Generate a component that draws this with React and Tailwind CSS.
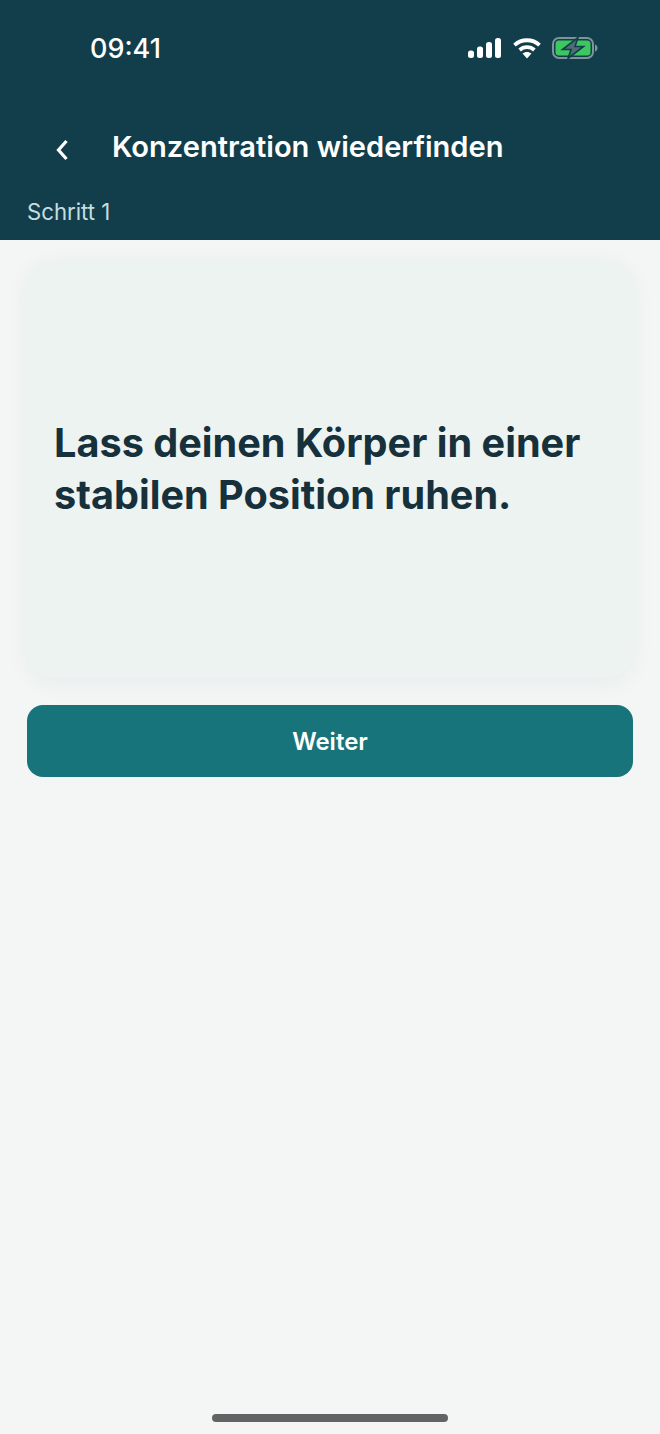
import React from 'react';

const StatusIcons = () => (
  <div className="flex items-center gap-[11px]">
    <svg width="34" height="20" viewBox="0 0 34 20" fill="#fff">
      <rect x="0" y="12.5" width="6" height="7.5" rx="2.5" />
      <rect x="9" y="8.5" width="6" height="11.5" rx="2.5" />
      <rect x="18" y="4" width="6" height="16" rx="2.5" />
      <rect x="27" y="0" width="6" height="20" rx="2.5" />
    </svg>
    <svg width="28" height="21" viewBox="0 0 28 21" fill="none" stroke="#fff" strokeWidth="3.8">
      <path d="M1.5 7.2C8.5 .6 19.5 .6 26.5 7.2" />
      <path d="M6.6 12C10.8 8.1 17.2 8.1 21.4 12" />
      <path d="M9.5 15.6L14 20.5l4.5-4.9C16 13.4 12 13.4 9.5 15.6Z" fill="#fff" stroke="none" />
    </svg>
    <svg width="46" height="22" viewBox="0 0 46 22">
      <rect x="1" y="1" width="40" height="20" rx="6" fill="none" stroke="#7d9499" strokeWidth="2" />
      <rect x="3.5" y="3.5" width="35" height="15" rx="3.5" fill="#3cc85f" />
      <path d="M43 7.5c1.7.5 2.5 1.8 2.5 3.5s-.8 3-2.5 3.5Z" fill="#7d9499" />
      <path d="M26 0.5 10.5 12.5h8.5L16 21.5 31.5 9.5H23Z" fill="#4f6d74" stroke="#123e4b" strokeWidth="1.6" />
    </svg>
  </div>
);

const App = () => {
  return (
    <div className="flex flex-col min-h-[1434px] bg-[#f3f6f5] font-['Inter',sans-serif]">
      <header className="h-[240px] bg-[#123e4b] flex flex-col text-white">
        <div className="h-[96px] pl-[90px] pr-[62px] flex items-center justify-between">
          <span className="text-[27px] leading-none font-medium">09:41</span>
          <StatusIcons />
        </div>
        <div className="mt-[14px] h-[74px] flex items-center pl-[55px]">
          <svg width="14" height="24" viewBox="0 0 14 24" fill="none" stroke="#fff" strokeWidth="3.2" className="mt-[5px]">
            <path d="M11.5 3 3.5 12l8 9" />
          </svg>
          <h1 className="ml-[43px] text-[29.1px] leading-none font-semibold">Konzentration wiederfinden</h1>
        </div>
        <p className="pl-[27px] mt-[13px] text-[22.2px] leading-[30px] text-[#c5dfe0]">Schritt 1</p>
      </header>

      <main className="px-[27px] pt-[20px] flex flex-col gap-[27px]">
        <section className="h-[418px] rounded-[27px] bg-[#edf3f1] shadow-[0_5px_24px_rgba(18,62,75,0.05)] px-[27px] flex items-center">
          <h2 className="text-[39.65px] leading-[52px] font-bold text-[#17313c]">
            Lass deinen Körper in einer stabilen Position ruhen.
          </h2>
        </section>
        <button className="h-[72px] rounded-[16px] bg-[#17747a] text-white text-[24px] font-semibold pt-[1px]">Weiter</button>
      </main>

      <div className="mt-auto pb-[12px] flex justify-center">
        <div className="w-[236px] h-[8px] rounded-full bg-[#616464]" />
      </div>
    </div>
  );
};

export default App;
